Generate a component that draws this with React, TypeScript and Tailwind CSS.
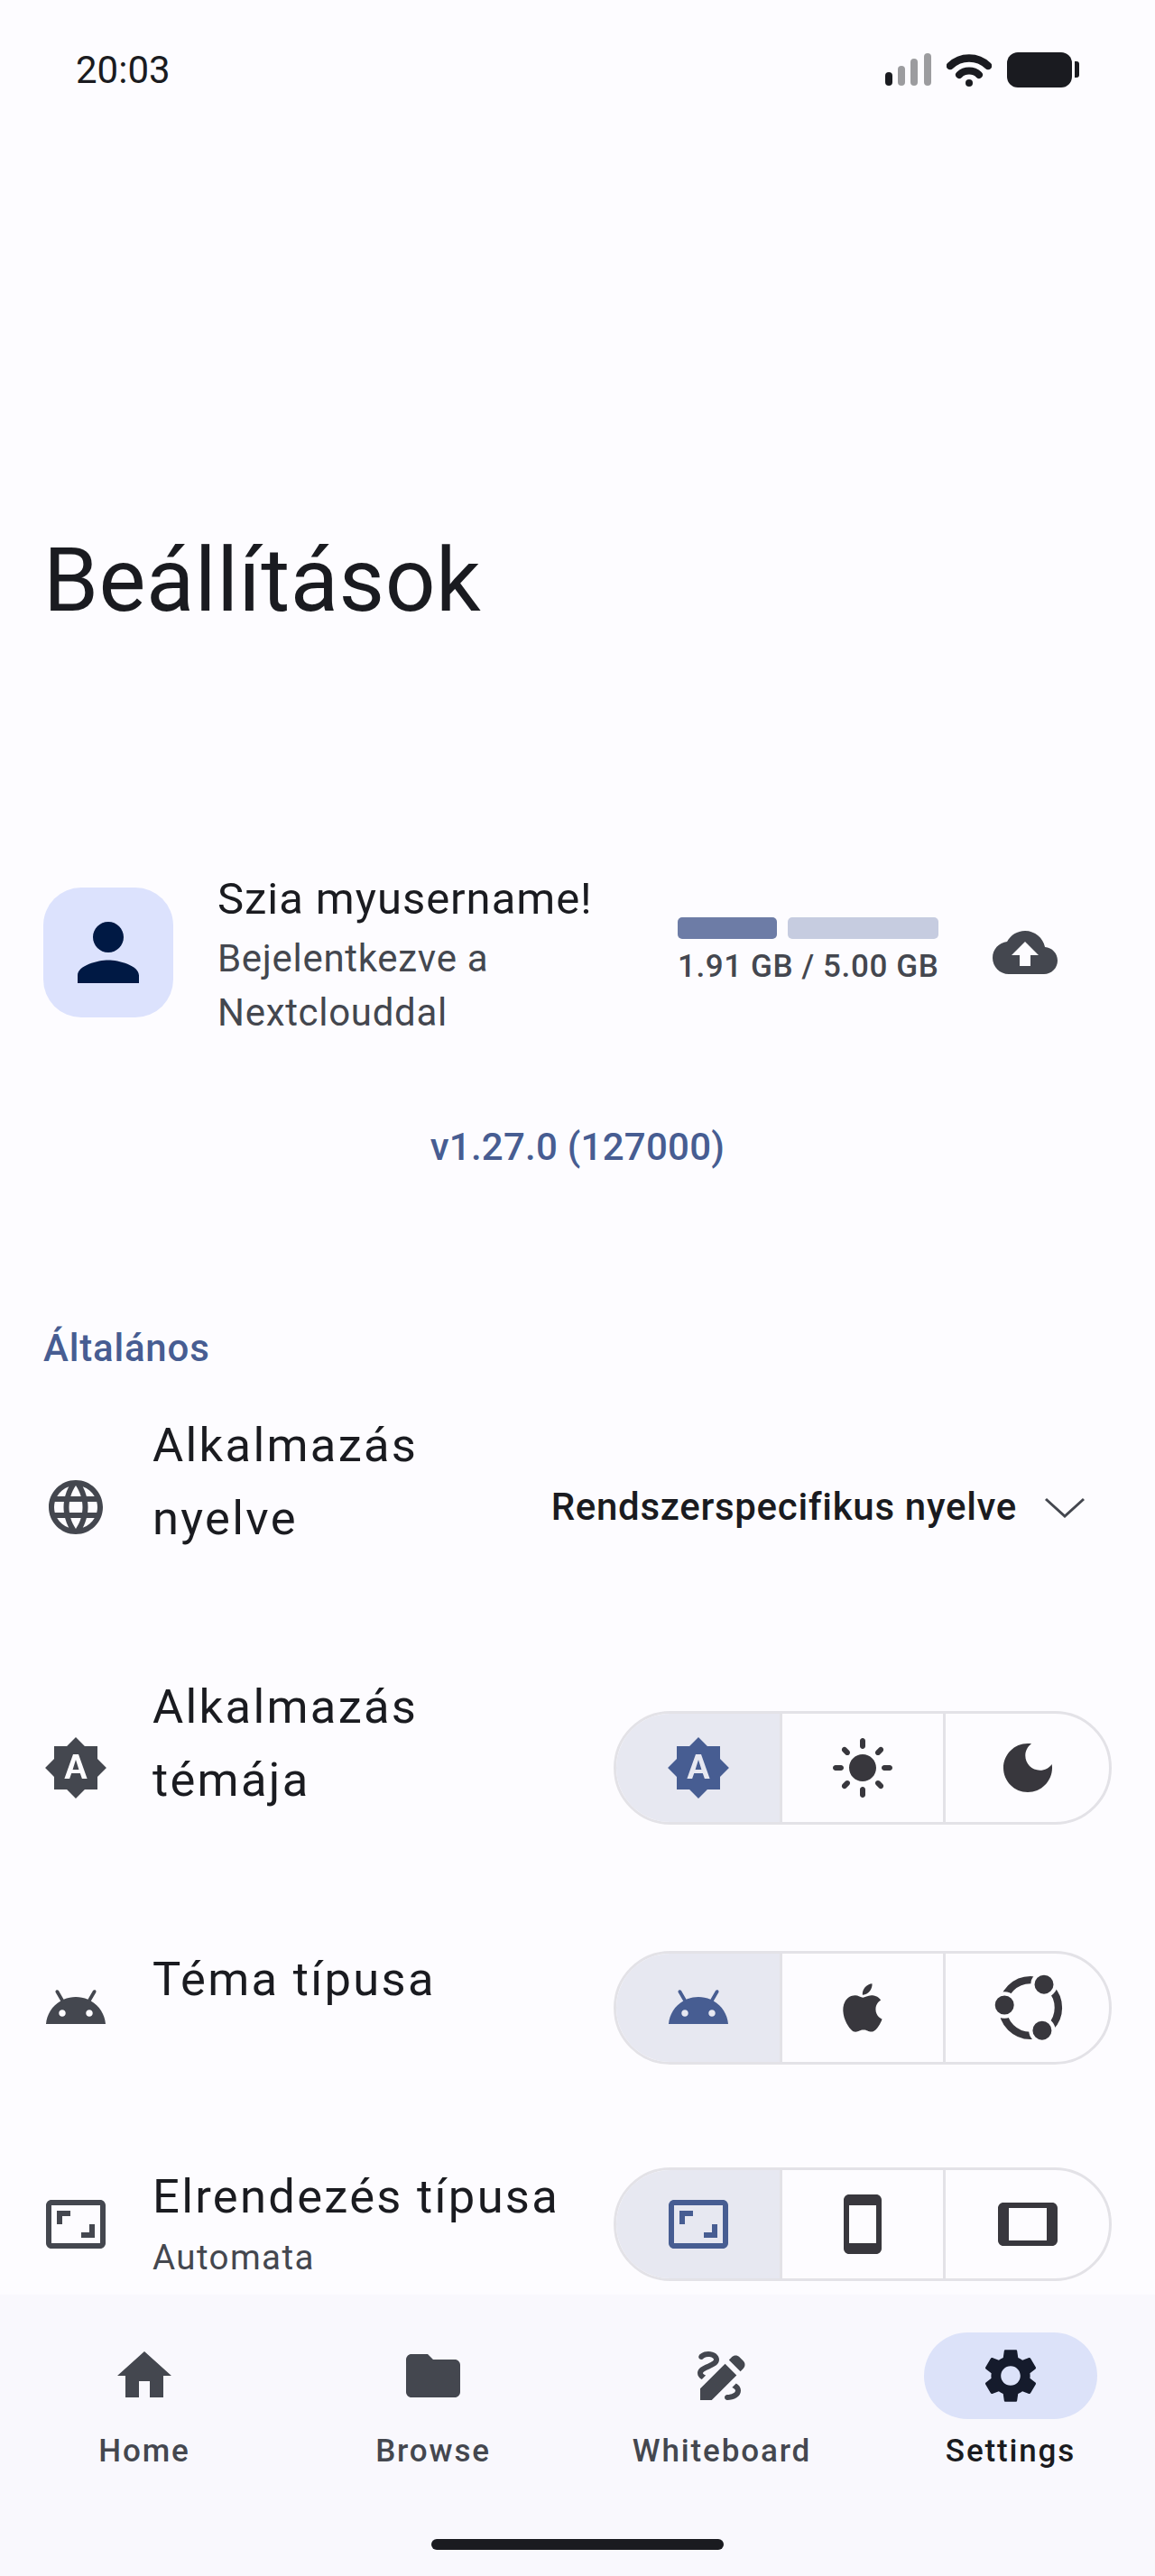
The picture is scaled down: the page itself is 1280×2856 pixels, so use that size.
import React from "react";

const P = {
  home: "M10 20v-6h4v6h5v-8h3L12 3 2 12h3v8z",
  folder: "M10 4H4c-1.1 0-1.99.9-1.99 2L2 18c0 1.1.9 2 2 2h16c1.1 0 2-.9 2-2V8c0-1.1-.9-2-2-2h-8l-2-2z",
  settings: "M19.14 12.94c.04-.3.06-.61.06-.94 0-.32-.02-.64-.07-.94l2.03-1.58c.18-.14.23-.41.12-.61l-1.92-3.32c-.12-.22-.37-.29-.59-.22l-2.39.96c-.5-.38-1.03-.7-1.62-.94l-.36-2.54c-.04-.24-.24-.41-.48-.41h-3.84c-.24 0-.43.17-.47.41l-.36 2.54c-.59.24-1.13.57-1.62.94l-2.39-.96c-.22-.08-.47 0-.59.22L2.74 8.87c-.12.21-.08.47.12.61l2.03 1.58c-.05.3-.09.63-.09.94s.02.64.07.94l-2.03 1.58c-.18.14-.23.41-.12.61l1.92 3.32c.12.22.37.29.59.22l2.39-.96c.5.38 1.03.7 1.62.94l.36 2.54c.05.24.24.41.48.41h3.84c.24 0 .44-.17.47-.41l.36-2.54c.59-.24 1.13-.56 1.62-.94l2.39.96c.22.08.47 0 .59-.22l1.92-3.32c.12-.22.07-.47-.12-.61l-2.01-1.58zM12 15.6c-1.98 0-3.6-1.62-3.6-3.6s1.62-3.6 3.6-3.6 3.6 1.62 3.6 3.6-1.62 3.6-3.6 3.6z",
  person: "M12 12c2.21 0 4-1.79 4-4s-1.79-4-4-4-4 1.79-4 4 1.79 4 4 4zm0 2c-2.67 0-8 1.34-8 4v2h16v-2c0-2.66-5.33-4-8-4z",
  cloud: "M19.35 10.04C18.67 6.59 15.64 4 12 4 9.11 4 6.6 5.64 5.35 8.04 2.34 8.36 0 10.91 0 14c0 3.31 2.69 6 6 6h13c2.76 0 5-2.24 5-5 0-2.64-2.05-4.78-4.65-4.96zM14 13v4h-4v-4H7l5-5 5 5h-3z",
  language: "M11.99 2C6.47 2 2 6.48 2 12s4.47 10 9.99 10C17.52 22 22 17.52 22 12S17.52 2 11.99 2zm6.93 6h-2.95c-.32-1.25-.78-2.45-1.38-3.56 1.84.63 3.37 1.91 4.33 3.56zM12 4.04c.83 1.2 1.48 2.53 1.91 3.96h-3.82c.43-1.43 1.08-2.76 1.91-3.96zM4.26 14C4.1 13.36 4 12.69 4 12s.1-1.36.26-2h3.38c-.08.66-.14 1.32-.14 2 0 .68.06 1.34.14 2H4.26zm.82 2h2.95c.32 1.25.78 2.45 1.38 3.56-1.84-.63-3.37-1.9-4.33-3.56zm2.95-8H5.08c.96-1.66 2.49-2.93 4.33-3.56C8.81 5.55 8.35 6.75 8.03 8zM12 19.96c-.83-1.2-1.48-2.53-1.91-3.96h3.82c-.43 1.43-1.08 2.76-1.91 3.96zM14.34 14H9.66c-.09-.66-.16-1.32-.16-2 0-.68.07-1.35.16-2h4.68c.09.65.16 1.32.16 2 0 .68-.07 1.34-.16 2zm.25 5.56c.6-1.11 1.06-2.31 1.38-3.56h2.95c-.96 1.65-2.49 2.93-4.33 3.56zM16.36 14c.08-.66.14-1.32.14-2 0-.68-.06-1.34-.14-2h3.38c.16.64.26 1.31.26 2s-.1 1.36-.26 2h-3.38z",
  auto: "M10.85 12.65h2.3L12 9l-1.15 3.65zM20 8.69V4h-4.69L12 .69 8.69 4H4v4.69L.69 12 4 15.31V20h4.69L12 23.31 15.31 20H20v-4.69L23.31 12 20 8.69zM14.3 16l-.7-2h-3.2l-.7 2H7.8L11 7h2l3.2 9h-1.9z",
  android: "M17.6 9.48l1.84-3.18c.16-.31.04-.69-.26-.85-.29-.15-.65-.06-.83.22l-1.88 3.24c-2.86-1.21-6.08-1.21-8.94 0L5.65 5.67c-.19-.29-.58-.38-.87-.2-.28.18-.37.54-.22.83L6.4 9.48C3.3 11.25 1.28 14.44 1 18h22c-.28-3.56-2.3-6.75-5.4-8.52zM7 15.25c-.69 0-1.25-.56-1.25-1.25s.56-1.25 1.25-1.25 1.25.56 1.25 1.25-.56 1.25-1.25 1.25zm10 0c-.69 0-1.25-.56-1.25-1.25s.56-1.25 1.25-1.25 1.25.56 1.25 1.25-.56 1.25-1.25 1.25z",
  aspect: "M19 12h-2v3h-3v2h5v-5zM7 9h3V7H5v5h2V9zm14-6H3c-1.1 0-2 .9-2 2v14c0 1.1.9 2 2 2h18c1.1 0 2-.9 2-2V5c0-1.1-.9-2-2-2zm0 16.01H3V4.99h18v14.02z",
  draw: "M18.85 10.39l1.06-1.06c.78-.78.78-2.05 0-2.83L18.5 5.09c-.78-.78-2.05-.78-2.83 0l-1.06 1.06 4.24 4.24zm-5.66-2.83L4 16.76V21h4.24l9.19-9.19-4.24-4.25zM19 17.5c0 2.19-2.54 3.5-5 3.5-.55 0-1-.45-1-1s.45-1 1-1c1.54 0 3-.73 3-1.5 0-.47-.48-.87-1.23-1.2l1.48-1.48c1.07.63 1.75 1.47 1.75 2.68zM4.58 13.35C3.61 12.79 3 12.06 3 11c0-1.8 1.89-2.63 3.56-3.36C7.59 7.18 9 6.56 9 6c0-.41-.78-1-2-1-1.26 0-1.8.61-1.83.64-.35.41-.98.46-1.4.12-.41-.34-.49-.95-.15-1.37C3.73 4.24 4.76 3 7 3s4 1.32 4 3c0 1.87-1.93 2.72-3.64 3.47C6.42 9.88 5 10.5 5 11c0 .31.43.6 1.07.86l-1.49 1.49z",
  sun: "M12 7c-2.76 0-5 2.24-5 5s2.24 5 5 5 5-2.24 5-5-2.24-5-5-5zM2 13h2c.55 0 1-.45 1-1s-.45-1-1-1H2c-.55 0-1 .45-1 1s.45 1 1 1zm18 0h2c.55 0 1-.45 1-1s-.45-1-1-1h-2c-.55 0-1 .45-1 1s.45 1 1 1zM11 2v2c0 .55.45 1 1 1s1-.45 1-1V2c0-.55-.45-1-1-1s-1 .45-1 1zm0 18v2c0 .55.45 1 1 1s1-.45 1-1v-2c0-.55-.45-1-1-1s-1 .45-1 1zM5.99 4.58c-.39-.39-1.03-.39-1.41 0-.39.39-.39 1.03 0 1.41l1.06 1.06c.39.39 1.03.39 1.41 0s.39-1.03 0-1.41L5.99 4.58zm12.37 12.37c-.39-.39-1.03-.39-1.41 0-.39.39-.39 1.03 0 1.41l1.06 1.06c.39.39 1.03.39 1.41 0 .39-.39.39-1.03 0-1.41l-1.06-1.06zm1.06-10.96c.39-.39.39-1.03 0-1.41-.39-.39-1.03-.39-1.41 0l-1.06 1.06c-.39.39-.39 1.03 0 1.41s1.03.39 1.41 0l1.06-1.06zM7.05 18.36c.39-.39.39-1.03 0-1.41-.39-.39-1.03-.39-1.41 0l-1.06 1.06c-.39.39-.39 1.03 0 1.41s1.03.39 1.41 0l1.06-1.06z",
  moon: "M12 3c-4.97 0-9 4.03-9 9s4.03 9 9 9 9-4.03 9-9c0-.46-.04-.92-.1-1.36-.98 1.37-2.58 2.26-4.4 2.26-2.98 0-5.4-2.42-5.4-5.4 0-1.81.89-3.42 2.26-4.4-.44-.06-.9-.1-1.36-.1z",
  apple: "M18.71 19.5c-.83 1.24-1.71 2.45-3.05 2.47-1.34.03-1.77-.79-3.29-.79-1.53 0-2 .77-3.27.82-1.31.05-2.3-1.32-3.14-2.53C4.25 17 2.94 12.45 4.7 9.39c.87-1.52 2.43-2.48 4.12-2.51 1.28-.02 2.5.87 3.29.87.78 0 2.26-1.07 3.81-.91.65.03 2.47.26 3.64 1.98-.09.06-2.17 1.28-2.15 3.81.03 3.02 2.65 4.03 2.68 4.04-.03.07-.42 1.44-1.38 2.83M13 3.5c.73-.83 1.94-1.46 2.94-1.5.13 1.17-.34 2.35-1.04 3.19-.69.85-1.83 1.51-2.95 1.42-.15-1.15.41-2.35 1.05-3.11z",
  phone: "M17 1.01L7 1c-1.1 0-2 .9-2 2v18c0 1.1.9 2 2 2h10c1.1 0 2-.9 2-2V3c0-1.1-.9-1.99-2-1.99zM17 19H7V5h10v14z",
  tablet: "M21 4H3c-1.1 0-2 .9-2 2v12c0 1.1.9 2 2 2h18c1.1 0 2-.9 2-2V6c0-1.1-.9-2-2-2zm-2 14H5V6h14v12z",
};

function Ic({ d, cls }: { d: string; cls: string }) {
  return (
    <svg viewBox="0 0 24 24" className={cls} fill="currentColor">
      <path d={d} />
    </svg>
  );
}

function Ring() {
  return (
    <svg viewBox="0 0 24 24" className="w-[72px] h-[72px] text-[#38373d]" fill="none" overflow="visible">
      <circle cx="13" cy="12" r="10.3" stroke="currentColor" strokeWidth="2.8" />
      <g fill="currentColor" stroke="#fdfcff" strokeWidth="1.4">
        <circle cx="18" cy="3.4" r="4.2" />
        <circle cx="3.4" cy="11" r="4.2" />
        <circle cx="17.3" cy="20.4" r="4.2" />
      </g>
    </svg>
  );
}

function Seg({ children }: { children: React.ReactNode[] }) {
  return (
    <div className="flex w-[552px] h-[126px] shrink-0 rounded-full border-[3px] border-[#e3e2e7] overflow-hidden">
      <div className="w-[184px] bg-[#e7e8f1] flex items-center justify-center border-r-[3px] border-[#e3e2e7] text-[#475d92]">
        {children[0]}
      </div>
      <div className="w-[181px] flex items-center justify-center border-r-[3px] border-[#e3e2e7] text-[#38373d]">
        {children[1]}
      </div>
      <div className="flex-1 flex items-center justify-center text-[#38373d]">{children[2]}</div>
    </div>
  );
}

function Row({
  icon,
  title,
  sub,
  right,
  cls,
  textCls,
  subCls,
}: {
  icon: string;
  title: React.ReactNode;
  sub?: string;
  right: React.ReactNode;
  cls: string;
  textCls: string;
  subCls?: string;
}) {
  return (
    <div className={`flex items-center pl-[48px] pr-[48px] ${cls}`}>
      <Ic d={icon} cls="w-[72px] h-[72px] shrink-0 text-[#44474f]" />
      <div className={`ml-[49px] flex-1 min-w-0 ${textCls}`}>
        <div className="text-[52.5px] leading-[81px] tracking-[2.3px] text-[#1a1b20] whitespace-nowrap">{title}</div>
        <div className={`h-[60px] text-[38.5px] leading-[52px] tracking-[1.4px] text-[#44474f] ${subCls ?? ""}`}>{sub}</div>
      </div>
      {right}
    </div>
  );
}

const NAV = [
  { d: P.home, l: "Home" },
  { d: P.folder, l: "Browse" },
  { d: P.draw, l: "Whiteboard" },
  { d: P.settings, l: "Settings", active: true },
];

export default function App() {
  const icon = "w-[72px] h-[72px]";
  return (
    <div
      className="w-[1280px] h-[2856px] bg-[#fdfcff] flex flex-col overflow-hidden"
      style={{ fontFamily: "Roboto, sans-serif" }}
    >
      <div className="h-[2544px] overflow-hidden">
        {/* status bar */}
        <div className="h-[154px] flex items-center justify-between pl-[84px] pr-[87px]">
          <span className="text-[42px] leading-[50px] text-[#1a1b20] mt-[2px]">20:03</span>
          <div className="flex items-center">
            <svg viewBox="0 0 54 38" className="w-[54px] h-[38px]">
              <rect x="1" y="22" width="8" height="15" rx="4" fill="#1a1b20" />
              <rect x="15" y="15" width="8" height="22" rx="4" fill="#9c9c9f" />
              <rect x="29" y="7" width="8" height="30" rx="4" fill="#9c9c9f" />
              <rect x="44" y="1" width="8" height="36" rx="4" fill="#9c9c9f" />
            </svg>
            <svg viewBox="0 0 50 38" className="w-[50px] h-[38px] ml-[15px]">
              <path d="M4 15 A30 30 0 0 1 46 15" fill="none" stroke="#1a1b20" strokeWidth="8.5" strokeLinecap="round" />
              <path d="M14 25 A16 16 0 0 1 36 25" fill="none" stroke="#1a1b20" strokeWidth="8" strokeLinecap="round" />
              <circle cx="25" cy="34" r="4" fill="#1a1b20" />
            </svg>
            <div className="w-[72px] h-[39px] rounded-[12px] bg-[#1a1b20] ml-[17px]" />
            <div className="w-[5px] h-[18px] rounded-r-[3px] bg-[#1a1b20] ml-[3px] mr-[-3px]" />
          </div>
        </div>

        <div className="pl-[48px] mt-[425px] text-[98px] leading-[130px] tracking-[0.5px] text-[#1a1b20]">Beállítások</div>

        {/* account */}
        <div className="flex mt-[275px] pl-[48px] pr-[48px]">
          <div className="w-[144px] h-[144px] rounded-[42px] bg-[#dce2fd] flex items-center justify-center shrink-0">
            <Ic d={P.person} cls="w-[102px] h-[102px] text-[#001944]" />
          </div>
          <div className="ml-[49px] w-[510px] -mt-[17px]">
            <div className="text-[49px] leading-[60px] tracking-[0.95px] text-[#1a1b20]">Szia myusername!</div>
            <div className="mt-[6px] text-[42px] leading-[60px] tracking-[0.7px] text-[#44474f]">
              Bejelentkezve a<br />Nextclouddal
            </div>
          </div>
          <div className="w-[289px] mt-[33px]">
            <div className="flex gap-[12px]">
              <div className="w-[110px] h-[24px] rounded-[5px] bg-[#6d7ca6]" />
              <div className="flex-1 h-[24px] rounded-[5px] bg-[#c6cce0]" />
            </div>
            <div className="text-[35px] leading-[44px] font-medium tracking-[0.6px] text-[#44474f] mt-[9px] whitespace-nowrap">
              1.91 GB / 5.00 GB
            </div>
          </div>
          <Ic d={P.cloud} cls="w-[72px] h-[72px] ml-[60px] mt-[36px] text-[#44474f]" />
        </div>

        <div className="text-center mt-[89px] text-[42px] leading-[60px] font-medium tracking-[0.25px] text-[#475d92]">
          v1.27.0 (127000)
        </div>

        <div className="pl-[48px] mt-[163px] text-[42px] leading-[60px] font-medium tracking-[0.8px] text-[#475d92]">
          Általános
        </div>

        <Row
          cls="mt-[39px] h-[214px]"
          textCls="mt-[4px]"
          icon={P.language}
          title={<>Alkalmazás<br />nyelve</>}
          right={
            <div className="flex items-center text-[#1a1b20] pr-[29px]">
              <span className="text-[42px] leading-[60px] font-medium tracking-[0.7px]">Rendszerspecifikus nyelve</span>
              <svg viewBox="0 0 46 24" className="w-[46px] h-[24px] ml-[30px]" fill="none" stroke="#44474f" strokeWidth="3">
                <path d="M2 3 L23 22 L44 3" />
              </svg>
            </div>
          }
        />
        <Row
          cls="mt-[75px] h-[214px]"
          textCls="mt-[6px]"
          icon={P.auto}
          title={<>Alkalmazás<br />témája</>}
          right={
            <Seg>
              <Ic d={P.auto} cls={icon} />
              <Ic d={P.sun} cls={icon} />
              <Ic d={P.moon} cls={icon} />
            </Seg>
          }
        />
        <Row
          cls="mt-[87px] h-[144px]"
          textCls="mb-[4px]"
          icon={P.android}
          title="Téma típusa"
          right={
            <Seg>
              <Ic d={P.android} cls={icon} />
              <Ic d={P.apple} cls="w-[64px] h-[64px]" />
              <Ring />
            </Seg>
          }
        />
        <Row
          cls="mt-[98px] h-[140px]"
          textCls="mb-[2px]"
          subCls="pt-[1px]"
          icon={P.aspect}
          title="Elrendezés típusa"
          sub="Automata"
          right={
            <Seg>
              <Ic d={P.aspect} cls={icon} />
              <Ic d={P.phone} cls={icon} />
              <Ic d={P.tablet} cls={icon} />
            </Seg>
          }
        />
      </div>

      {/* bottom nav */}
      <div className="flex-1 bg-[#f9f8fd] flex flex-col">
        <div className="flex pt-[42px]">
          {NAV.map((n) => (
            <div key={n.l} className="w-[320px] flex flex-col items-center">
              <div
                className={`w-[192px] h-[96px] rounded-full flex items-center justify-center ${
                  n.active ? "bg-[#dce2f9] text-[#151b2c]" : "text-[#44474f]"
                }`}
              >
                <Ic d={n.d} cls={icon} />
              </div>
              <div
                className={`mt-[14px] text-[35px] leading-[44px] font-medium tracking-[1.85px] ${
                  n.active ? "text-[#1a1b20]" : "text-[#44474f]"
                }`}
              >
                {n.l}
              </div>
            </div>
          ))}
        </div>
        <div className="w-[324px] h-[12px] rounded-full bg-[#1a1b20] mx-auto mt-[75px]" />
      </div>
    </div>
  );
}
